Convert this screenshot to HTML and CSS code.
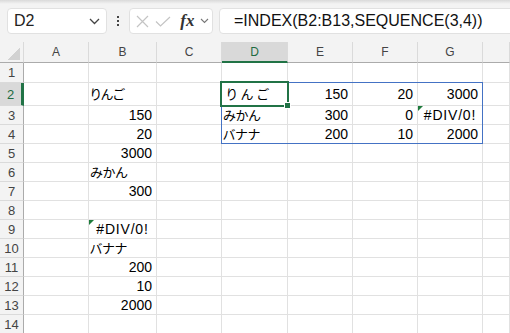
FILE: index.html
```html
<!DOCTYPE html>
<html lang="ja">
<head>
  <meta charset="UTF-8">
  <title>INDEX + SEQUENCE</title>
  <link rel="stylesheet" href="styles.css">
</head>
<body>
  <div class="toolbar">
    <div class="namebox">
      <span>D2</span>
      <svg class="chev" width="11" height="7" viewBox="0 0 11 7"><path d="M1 1l4.5 4.5L10 1" fill="none" stroke="#444" stroke-width="1.3"/></svg>
    </div>
    <div class="more"><i></i><i></i><i></i></div>
    <div class="fnbox">
      <svg width="13" height="13" viewBox="0 0 13 13"><path d="M1 1l11 11M12 1L1 12" fill="none" stroke="#c4c4c4" stroke-width="1.2"/></svg>
      <svg width="16" height="11" viewBox="0 0 16 11"><path d="M1 5.5l4.5 4.5L15 1" fill="none" stroke="#c4c4c4" stroke-width="1.2"/></svg>
      <span class="fx">fx</span>
      <svg width="9" height="6" viewBox="0 0 9 6"><path d="M1 1l3.5 3.5L8 1" fill="none" stroke="#777" stroke-width="1.1"/></svg>
    </div>
    <div class="formula">=INDEX(B2:B13,SEQUENCE(3,4))</div>
  </div>

  <div class="sheet">
    <div class="hd corner"><i></i></div><div class="hd">A</div><div class="hd">B</div><div class="hd">C</div><div class="hd on">D</div><div class="hd">E</div><div class="hd">F</div><div class="hd">G</div><div class="hd"></div>

    <div class="rh">1</div><div class="c"></div><div class="c"></div><div class="c"></div><div class="c"></div><div class="c"></div><div class="c"></div><div class="c"></div><div class="c"></div>
    <div class="rh on">2</div><div class="c"></div><div class="c jp">りんご</div><div class="c"></div><div class="c jp wide">りんご</div><div class="c r">150</div><div class="c r">20</div><div class="c r">3000</div><div class="c"></div>
    <div class="rh">3</div><div class="c"></div><div class="c r">150</div><div class="c"></div><div class="c jp">みかん</div><div class="c r">300</div><div class="c r">0</div><div class="c err">#DIV/0!</div><div class="c"></div>
    <div class="rh">4</div><div class="c"></div><div class="c r">20</div><div class="c"></div><div class="c jp">バナナ</div><div class="c r">200</div><div class="c r">10</div><div class="c r">2000</div><div class="c"></div>
    <div class="rh">5</div><div class="c"></div><div class="c r">3000</div><div class="c"></div><div class="c"></div><div class="c"></div><div class="c"></div><div class="c"></div><div class="c"></div>
    <div class="rh">6</div><div class="c"></div><div class="c jp">みかん</div><div class="c"></div><div class="c"></div><div class="c"></div><div class="c"></div><div class="c"></div><div class="c"></div>
    <div class="rh">7</div><div class="c"></div><div class="c r">300</div><div class="c"></div><div class="c"></div><div class="c"></div><div class="c"></div><div class="c"></div><div class="c"></div>
    <div class="rh">8</div><div class="c"></div><div class="c"></div><div class="c"></div><div class="c"></div><div class="c"></div><div class="c"></div><div class="c"></div><div class="c"></div>
    <div class="rh">9</div><div class="c"></div><div class="c err">#DIV/0!</div><div class="c"></div><div class="c"></div><div class="c"></div><div class="c"></div><div class="c"></div><div class="c"></div>
    <div class="rh">10</div><div class="c"></div><div class="c jp">バナナ</div><div class="c"></div><div class="c"></div><div class="c"></div><div class="c"></div><div class="c"></div><div class="c"></div>
    <div class="rh">11</div><div class="c"></div><div class="c r">200</div><div class="c"></div><div class="c"></div><div class="c"></div><div class="c"></div><div class="c"></div><div class="c"></div>
    <div class="rh">12</div><div class="c"></div><div class="c r">10</div><div class="c"></div><div class="c"></div><div class="c"></div><div class="c"></div><div class="c"></div><div class="c"></div>
    <div class="rh">13</div><div class="c"></div><div class="c r">2000</div><div class="c"></div><div class="c"></div><div class="c"></div><div class="c"></div><div class="c"></div><div class="c"></div>
    <div class="rh">14</div><div class="c"></div><div class="c"></div><div class="c"></div><div class="c"></div><div class="c"></div><div class="c"></div><div class="c"></div><div class="c"></div>

    <!-- spill range and active cell -->
    <div class="spill"></div>
    <div class="active"><span class="handle"></span></div>
  </div>
</body>
</html>
```

FILE: styles.css
```css
* { box-sizing: border-box; }
body {
  margin: 0;
  width: 510px;
  height: 333px;
  overflow: hidden;
  background: #fff;
  font-family: "Liberation Sans", "Noto Sans CJK JP", sans-serif;
}

.toolbar {
  height: 42px;
  display: flex;
  align-items: center;
  padding-left: 7px;
  background: linear-gradient(#d9d9d9, #f3f3f3 4px);
  overflow: hidden;
}
.namebox, .fnbox, .formula {
  height: 26px;
  background: #fff;
  border: 1px solid #e1e1e1;
  border-radius: 4px;
  display: flex;
  align-items: center;
}
.namebox {
  width: 100px;
  flex: none;
  padding: 0 6px 0 6px;
  justify-content: space-between;
  font-size: 16px;
  color: #222;
}
.more {
  width: 22px;
  flex: none;
  display: flex;
  flex-direction: column;
  align-items: center;
  gap: 2px;
}
.more i { width: 2px; height: 2px; background: #444; }
.fnbox {
  width: 84px;
  flex: none;
  padding: 0 3px 0 6px;
  justify-content: space-between;
}
.fx {
  font-family: "Liberation Serif", serif;
  font-style: italic;
  font-weight: bold;
  font-size: 17px;
  color: #333;
  margin-left: 4px;
}
.formula {
  flex: 1;
  margin-left: 6px;
  margin-right: -10px;
  padding-left: 14px;
  font-size: 16px;
  color: #111;
}

.sheet {
  position: relative;
  display: grid;
  grid-template-columns: 24px 65px 68px 65px 66px 65px 65px 65px 1fr;
  grid-template-rows: 21px 20px 23px repeat(12, 19px);
}
.hd, .rh {
  background: #f3f3f3;
  color: #444;
  font-size: 12px;
  display: flex;
  align-items: center;
  justify-content: center;
}
.hd {
  border-right: 1px solid #dadada;
  border-bottom: 1px solid #ababab;
}
.rh {
  border-right: 1px solid #ababab;
  border-bottom: 1px solid #dadada;
  font-size: 13px;
}
.hd.on {
  background: #d9d9d9;
  color: #1e6b41;
  border-bottom: 2px solid #217346;
}
.rh.on {
  background: #d9d9d9;
  color: #1e6b41;
  border-right: 3px solid #217346;
}
.corner {
  justify-content: flex-end;
  align-items: flex-end;
  padding: 0 3px 2px 0;
}
.corner i {
  width: 12px;
  height: 12px;
  background: linear-gradient(to bottom right, transparent 50%, #d2d2d2 50%);
}

.c {
  position: relative;
  border-right: 1px solid #e1e1e1;
  border-bottom: 1px solid #e1e1e1;
  display: flex;
  align-items: center;
  padding: 0 4px 0 1px;
  font-size: 14px;
  line-height: 16px;
  color: #000;
  white-space: nowrap;
}
.r { justify-content: flex-end; }
.jp {
  font-family: "Noto Sans CJK JP", sans-serif;
  font-size: 13px;
  font-feature-settings: "palt";
}
.jp.wide {
  font-feature-settings: "palt";
  letter-spacing: 4px;
  padding-left: 4px;
}
.err {
  justify-content: center;
  padding: 0;
  letter-spacing: 0.8px;
}
.err::before {
  content: "";
  position: absolute;
  top: 0;
  left: 0;
  border-style: solid;
  border-width: 5px 5px 0 0;
  border-color: #1e7b3c transparent transparent transparent;
}

.spill {
  position: absolute;
  grid-column: 5 / 9;
  grid-row: 3 / 6;
  inset: -1px 0 0 -1px;
  border: 1px solid #4472c4;
}
.active {
  position: absolute;
  grid-column: 5 / 6;
  grid-row: 3 / 4;
  inset: -2px -1px -1px -2px;
  border: 2px solid #217346;
}
.handle {
  position: absolute;
  right: -4px;
  bottom: -4px;
  width: 7px;
  height: 7px;
  background: #217346;
  border: 1px solid #fff;
}
```
